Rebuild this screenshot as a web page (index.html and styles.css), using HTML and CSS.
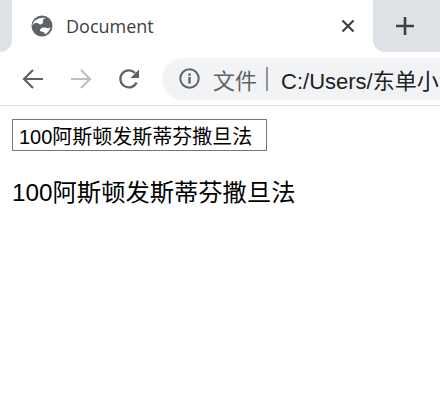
FILE: index.html
```html
<!DOCTYPE html>
<html>
<head>
  <title>Document</title>
  <link rel="stylesheet" href="styles.css">
</head>
<body>
  <div class="tab-strip">
    <div class="tab-gap-left"></div>
    <div class="tab">
      <svg class="globe" width="22" height="22" viewBox="0 0 22 22">
        <circle cx="11" cy="11" r="10.5" fill="#5f6368"/>
        <path d="M1.5 11 C3 7 6 7 8 9 C10 10.5 13 8 12 6 C11.5 4.5 13 3 15.5 3 C12 2 6 3 3.5 6 C2.3 7.5 1.6 9 1.5 11 Z" fill="#fff"/>
        <path d="M9 15 C10 12.5 13 12 15.5 13 C17 13.6 18.5 13 19.5 12 C19 15 17 18 14 19.5 C13.5 17.5 12.5 16.5 10.5 16.5 C9.5 16.5 9 16 9 15 Z" fill="#fff"/>
      </svg>
      <span class="tab-title">Document</span>
      <svg class="close" width="14" height="14" viewBox="0 0 14 14">
        <path d="M1.5 1.5 L12.5 12.5 M12.5 1.5 L1.5 12.5" stroke="#3c4043" stroke-width="2.2" fill="none"/>
      </svg>
    </div>
    <div class="tab-gap-right">
      <svg class="plus" width="20" height="20" viewBox="0 0 20 20">
        <path d="M10 1 V19 M1 10 H19" stroke="#3c4043" stroke-width="2.6" fill="none"/>
      </svg>
    </div>
  </div>

  <div class="toolbar">
    <svg class="nav-btn" width="22" height="22" viewBox="0 0 22 22">
      <path d="M21 11 H2 M11 2 L2 11 L11 20" stroke="#5f6368" stroke-width="2.2" fill="none"/>
    </svg>
    <svg class="nav-btn" width="22" height="22" viewBox="0 0 22 22">
      <path d="M1 11 H20 M11 2 L20 11 L11 20" stroke="#bdc1c6" stroke-width="2.2" fill="none"/>
    </svg>
    <svg class="nav-btn" width="22" height="22" viewBox="0 0 22 22">
      <path d="M18.6 14.5 A8.5 8.5 0 1 1 17 5" stroke="#5f6368" stroke-width="2.3" fill="none"/>
      <path d="M21 1.5 V10 H12.5 Z" fill="#5f6368"/>
    </svg>
    <div class="omnibox">
      <svg class="info" width="21" height="21" viewBox="0 0 21 21">
        <circle cx="10.5" cy="10.5" r="9.2" stroke="#5f6368" stroke-width="2" fill="none"/>
        <rect x="9.3" y="9" width="2.4" height="6.5" fill="#5f6368"/>
        <rect x="9.3" y="5.4" width="2.4" height="2.4" fill="#5f6368"/>
      </svg>
      <span class="scheme">文件</span>
      <span class="divider"></span>
      <span class="url">C:/Users/东单小混混/Desktop/index.html</span>
    </div>
  </div>

  <div class="content">
    <input class="text-input" type="text" value="100阿斯顿发斯蒂芬撒旦法">
    <p class="output">100阿斯顿发斯蒂芬撒旦法</p>
  </div>
</body>
</html>
```

FILE: styles.css
```css
html, body {
  margin: 0;
  height: 100%;
  overflow: hidden;
}

body {
  background: #fff;
  font-family: "Liberation Sans", "Noto Sans CJK SC", sans-serif;
}

.tab-strip {
  display: flex;
  height: 52px;
  background: #fff;
}

.tab-gap-left {
  width: 12px;
  background: #dee1e6;
  border-bottom-right-radius: 12px;
}

.tab {
  width: 361px;
  display: flex;
  align-items: center;
  background: #fff;
  padding: 0 18px 0 19px;
  box-sizing: border-box;
}

.tab-title {
  margin-left: 13px;
  flex: 1;
  font-family: "Open Sans", "Liberation Sans", sans-serif;
  font-size: 18px;
  color: #3c4043;
}

.tab-gap-right {
  flex: 1;
  display: flex;
  align-items: center;
  background: #dee1e6;
  border-bottom-left-radius: 12px;
  padding-left: 22px;
}

.toolbar {
  height: 53px;
  display: flex;
  align-items: center;
  background: #fff;
  border-bottom: 1px solid #dadce0;
  padding-left: 22px;
  overflow: hidden;
}

.nav-btn {
  margin-right: 26px;
  flex: none;
}

.omnibox {
  flex: none;
  width: 400px;
  height: 42px;
  margin-left: -4px;
  display: flex;
  align-items: center;
  background: #f1f3f4;
  border-radius: 21px;
  padding-left: 17px;
  white-space: nowrap;
}

.info {
  flex: none;
}

.scheme {
  flex: none;
  margin-left: 13px;
  font-size: 22px;
  color: #5f6368;
}

.divider {
  flex: none;
  width: 2px;
  height: 24px;
  margin: 0 13px 0 9px;
  background: #8f9296;
}

.url {
  flex: none;
  font-size: 22px;
  color: #202124;
}

.content {
  padding: 13px 12px;
}

.text-input {
  display: block;
  width: 255px;
  height: 32px;
  box-sizing: border-box;
  padding: 0 6px;
  border: 1px solid #767676;
  border-radius: 0;
  font-family: inherit;
  font-size: 20px;
  color: #000;
}

.output {
  margin: 22px 0 0;
  font-size: 24.3px;
  color: #000;
}
```
